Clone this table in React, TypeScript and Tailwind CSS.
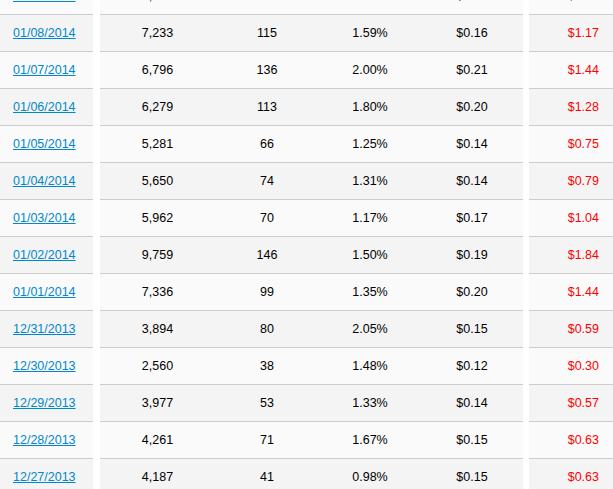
const rows: [string, string, string, string, string, string][] = [
  ['01/09/2014', '7,012', '111', '1.58%', '$0.15', '$1.05'],
  ['01/08/2014', '7,233', '115', '1.59%', '$0.16', '$1.17'],
  ['01/07/2014', '6,796', '136', '2.00%', '$0.21', '$1.44'],
  ['01/06/2014', '6,279', '113', '1.80%', '$0.20', '$1.28'],
  ['01/05/2014', '5,281', '66', '1.25%', '$0.14', '$0.75'],
  ['01/04/2014', '5,650', '74', '1.31%', '$0.14', '$0.79'],
  ['01/03/2014', '5,962', '70', '1.17%', '$0.17', '$1.04'],
  ['01/02/2014', '9,759', '146', '1.50%', '$0.19', '$1.84'],
  ['01/01/2014', '7,336', '99', '1.35%', '$0.20', '$1.44'],
  ['12/31/2013', '3,894', '80', '2.05%', '$0.15', '$0.59'],
  ['12/30/2013', '2,560', '38', '1.48%', '$0.12', '$0.30'],
  ['12/29/2013', '3,977', '53', '1.33%', '$0.14', '$0.57'],
  ['12/28/2013', '4,261', '71', '1.67%', '$0.15', '$0.63'],
  ['12/27/2013', '4,187', '41', '0.98%', '$0.15', '$0.63'],
];

export default function App() {
  return (
    <div className="w-[613px] h-[489px] overflow-hidden bg-white font-['Liberation_Sans',Arial,sans-serif] text-[12.5px] text-black">
      <div className="-mt-[22px]">
        {rows.map((r, i) => {
          // alternating stripes: first (partial) row is the light one
          const bg = i % 2 === 0 ? 'bg-[#fafafa]' : 'bg-[#f4f4f4]';
          return (
            <div key={r[0]} className="flex h-[37px]">
              <div className={`${bg} w-[93px] border-b border-[#cccccc] flex items-center pl-[13px] pt-px`}>
                <a href="#" className="text-[#0088cc] underline">{r[0]}</a>
              </div>
              <div className={`${bg} ml-[7px] w-[423px] border-b border-[#cccccc] grid grid-cols-[115px_104px_102px_102px] items-center text-center pt-px`}>
                <span>{r[1]}</span>
                <span>{r[2]}</span>
                <span>{r[3]}</span>
                <span>{r[4]}</span>
              </div>
              <div className={`${bg} ml-[6px] w-[84px] border-b border-[#cccccc] flex items-center justify-end pr-[14px] pt-px text-[#ff0000]`}>
                {r[5]}
              </div>
            </div>
          );
        })}
      </div>
    </div>
  );
}
